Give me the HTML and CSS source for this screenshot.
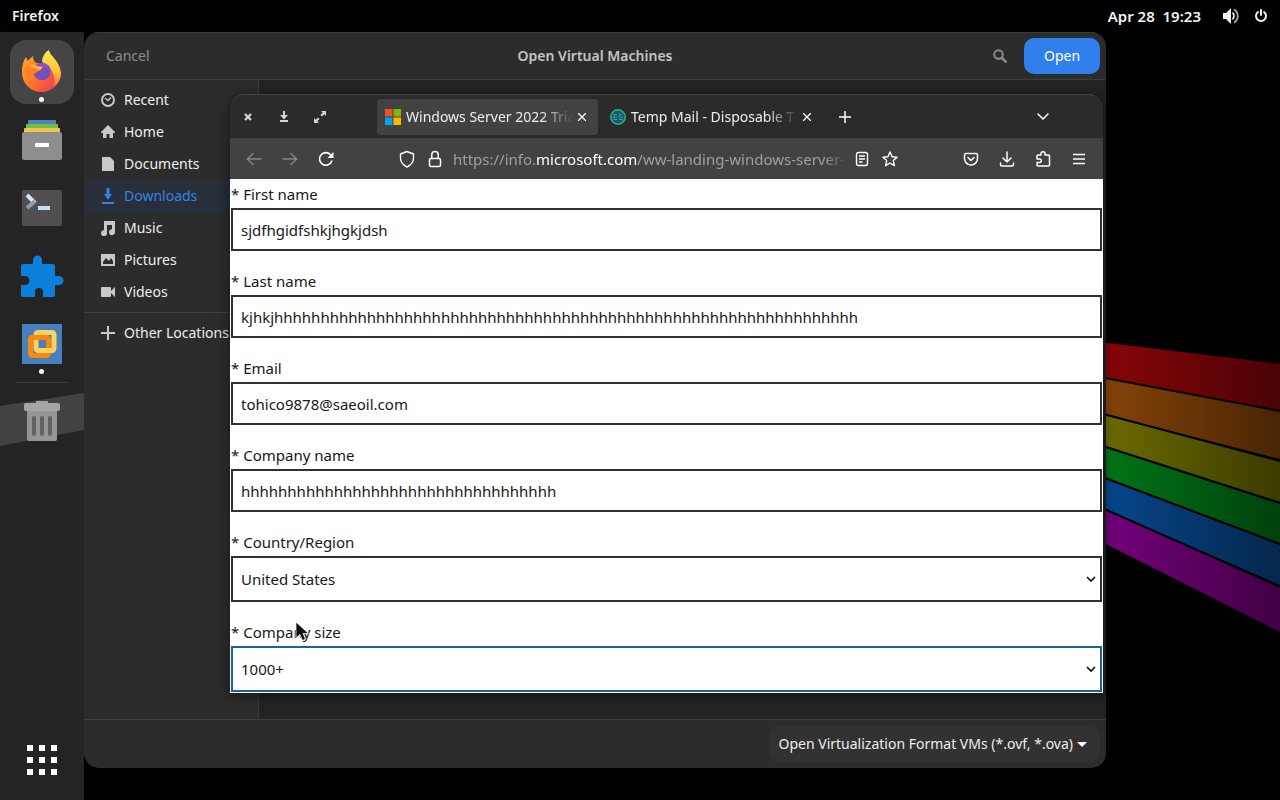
FILE: index.html
```html
<!DOCTYPE html>
<html lang="en">
<head>
    <meta charset="UTF-8">
    <meta name="viewport" content="width=device-width, initial-scale=1.0">
    <title>Desktop</title>
    <link rel="stylesheet" href="styles.css">
</head>
<body>

    <svg class="wallpaper" viewBox="0 0 1280 800" preserveAspectRatio="none" aria-hidden="true">
        <defs>
            <linearGradient id="shade" x1="1106" x2="1280" y1="0" y2="0" gradientUnits="userSpaceOnUse">
                <stop offset="0" stop-color="#000" stop-opacity="0"/>
                <stop offset="1" stop-color="#000" stop-opacity="0.45"/>
            </linearGradient>
        </defs>
        <rect width="1280" height="800" fill="#000"/>
        <path fill="#870508" d="M1100 342l180 22v46l-180-33z"/>
        <path fill="#844308" d="M1100 377l180 34v48l-180-46z"/>
        <path fill="#6b6b00" d="M1100 414l180 47v41l-180-57z"/>
        <path fill="#007517" d="M1100 446l180 58v39l-180-67z"/>
        <path fill="#07468b" d="M1100 477l180 68v40l-180-78z"/>
        <path fill="#74007b" d="M1100 508l180 79v45l-180-91z"/>
        <path fill="none" stroke="#050505" stroke-width="2" d="M1100 377l180 34M1100 413l180 48M1100 445l180 58M1100 476l180 68M1100 507l180 80"/>
        <path fill="url(#shade)" d="M1100 330h180v310h-180z"/>
    </svg>

    <header class="topbar">
        <span class="app-name">Firefox</span>
        <span class="clock">Apr 28&nbsp; 19:23</span>
        <span class="status">
            <svg width="16" height="16" viewBox="0 0 16 16"><path fill="#f2f2f2" d="M0 5h3l5-5v16l-5-5H0z"/><path fill="none" stroke="#f2f2f2" stroke-width="1.7" d="M9.5 4.7a4.5 4.5 0 0 1 0 6.6"/><path fill="none" stroke="#b0b0b0" stroke-width="1.7" d="M11 1.5a7.5 7.5 0 0 1 0 13"/></svg>
            <svg width="14" height="14" viewBox="0 0 14 14" fill="none" stroke="#f2f2f2" stroke-width="2" stroke-linecap="round"><path d="M4 3a5 5 0 1 0 6 0M7 1v5"/></svg>
        </span>
    </header>

    <div class="desktop">
        <nav class="dock" aria-label="Dock">
            <svg class="dock-band" viewBox="0 0 84 54" preserveAspectRatio="none" aria-hidden="true"><path fill="#434343" d="M0 13L84 0v37L0 53z"/></svg>

            <button class="dock-item active" aria-label="Firefox">
                <svg width="42" height="44" viewBox="0 0 42 44">
                    <defs>
                        <linearGradient id="fox" x1="4" y1="14" x2="36" y2="38" gradientUnits="userSpaceOnUse">
                            <stop offset="0" stop-color="#ff9a2b"/>
                            <stop offset="0.5" stop-color="#ff6d2a"/>
                            <stop offset="1" stop-color="#e93a5c"/>
                        </linearGradient>
                        <linearGradient id="flame" x1="28" y1="2" x2="36" y2="36" gradientUnits="userSpaceOnUse">
                            <stop offset="0" stop-color="#ffe352"/>
                            <stop offset="0.6" stop-color="#ffc23a"/>
                            <stop offset="1" stop-color="#ff7139"/>
                        </linearGradient>
                    </defs>
                    <path fill="url(#fox)" d="M1 22c0-6 1-11 4-15l2 4c1-2 3-3 5-5 0 3 1 5 3 7h12l13 9c0 12-9 20-19.500 20S1 34 1 22z"/>
                    <path fill="url(#flame)" d="M21 10c1-4 3-8 7-10 1 5 5 7 8 12 7 11 4 20-4 25 3-7 1-14-3-19-3-3-8-4-8-8z"/>
                    <circle cx="21" cy="21.500" r="8.800" fill="#7350b4"/>
                    <path fill="#8c50d0" d="M15 15c5-4 13-2 14 5-4-3-8-4-14-5z"/>
                    <path fill="#ff8126" d="M3 18c3-5 9-5 13-2l5 2c-1 2-3 3-5 4-3 1-4 4-3 7-5-1-9-6-10-11z"/>
                    <path fill="#ffb03f" d="M7 15c4-1 7 0 9 1l6 1-3 3c-4-1-8-2-12-5z"/>
                </svg>
                <i class="dot"></i>
            </button>

            <button class="dock-item" aria-label="Files">
                <svg width="40" height="40" viewBox="0 0 40 40"><rect x="6" width="28" height="8" rx="1" fill="#4b85bd"/><rect x="4" y="4" width="32" height="8" rx="1" fill="#76bd46"/><rect x="2" y="8" width="36" height="8" rx="1" fill="#f1c552"/><rect y="12" width="40" height="28" rx="2" fill="#8e8e8e"/><rect x="13" y="23" width="14" height="4" rx="1" fill="#fff"/></svg>
            </button>

            <button class="dock-item" aria-label="Terminal">
                <svg width="40" height="36" viewBox="0 0 40 36"><rect width="40" height="36" rx="2" fill="#505050"/><path fill="none" stroke="#d4e6f7" stroke-width="4" d="M5 5l8 8"/><path fill="none" stroke="#9b9b9b" stroke-width="4" d="M13 11l-8 7"/><path fill="#c5e0f7" d="M16 16h12v4H16z"/></svg>
            </button>

            <button class="dock-item" aria-label="Extensions">
                <svg width="44" height="44" viewBox="0 0 44 44"><path fill="#0b80da" d="M3 10h10V6a4.500 4.500 0 0 1 9 0v4h11a2 2 0 0 1 2 2v10h4a4 4 0 0 1 0 9h-4v10a2 2 0 0 1-2 2H23v-5a4 4 0 0 0-8 0v5H3a2 2 0 0 1-2-2V31h4a4 4 0 0 0 0-9H1V12a2 2 0 0 1 2-2z"/></svg>
            </button>

            <button class="dock-item" aria-label="VMware">
                <svg width="40" height="40" viewBox="0 0 40 40"><rect width="40" height="40" fill="#4680bf"/><rect x="8.500" y="13.500" width="18" height="18" rx="2" fill="none" stroke="#f7890f" stroke-width="5"/><rect x="14" y="8.500" width="18" height="18" rx="2" fill="none" stroke="#fdd05f" stroke-width="5"/><path fill="none" stroke="#f7890f" stroke-width="5" d="M8.500 24v-8.500q0-2 2-2H17"/></svg>
                <i class="dot"></i>
            </button>

            <hr class="dock-line">

            <button class="dock-item" aria-label="Trash">
                <svg width="36" height="40" viewBox="0 0 36 40"><path fill="#a2a2a2" d="M12 0h12v3H12z"/><rect y="2" width="36" height="8" rx="2" fill="#a5a5a5"/><path fill="#959595" d="M3 10h30v28q0 2-2 2H5q-2 0-2-2z"/><path stroke="#626262" stroke-width="4" stroke-linecap="round" d="M10 17v16M18 17v16M26 17v16"/></svg>
            </button>

            <button class="dock-item apps" aria-label="Show applications">
                <svg width="30" height="30" viewBox="0 0 30 30" fill="#fff"><path d="M0 0h6v6H0zM12 0h6v6h-6zM24 0h6v6h-6zM0 12h6v6H0zM12 12h6v6h-6zM24 12h6v6h-6zM0 24h6v6H0zM12 24h6v6h-6zM24 24h6v6h-6z"/></svg>
            </button>
        </nav>

        <main class="stage">
            <section class="dialog">
                <header class="dialog-header">
                    <button class="cancel">Cancel</button>
                    <h1>Open Virtual Machines</h1>
                    <div class="dialog-actions">
                        <button class="search" aria-label="Search">
                            <svg width="14" height="14" viewBox="0 0 14 14" fill="none" stroke="#8c8c8c" stroke-width="2"><circle cx="5.5" cy="5.5" r="4.3"/><path stroke-width="2.5" d="M8.5 8.5l5 5"/></svg>
                        </button>
                        <button class="open">Open</button>
                    </div>
                </header>
                <div class="dialog-body">
                    <nav class="places" aria-label="Places">
                        <a href="#"><svg width="16" height="16" viewBox="0 0 16 16" fill="none" stroke="#c8c8c8" stroke-width="2"><circle cx="8" cy="8" r="6"/><path stroke-width="1.5" d="M5 6l3 2.5L11 5.500"/></svg>Recent</a>
                        <a href="#"><svg width="16" height="16" viewBox="0 0 16 16" fill="#c8c8c8"><path d="M8 1l7 7v1h-2v5H9.500V10h-3v4H3V9H1V8z"/></svg>Home</a>
                        <a href="#"><svg width="16" height="16" viewBox="0 0 16 16" fill="#c8c8c8"><path d="M2 1h8l4 4v10H2z"/></svg>Documents</a>
                        <a href="#" class="current"><svg width="16" height="16" viewBox="0 0 16 16" fill="#3584e4"><path d="M6.500 0h3v6H12l-4 6-4-6h2.500zM2 14h12v2H2z"/></svg>Downloads</a>
                        <a href="#"><svg width="16" height="16" viewBox="0 0 16 16" fill="#c8c8c8"><path d="M4 1h11v11a3 3 0 1 1-3-2.800V5H7v8a3 3 0 1 1-3-2.800z"/></svg>Music</a>
                        <a href="#"><svg width="16" height="16" viewBox="0 0 16 16" fill="#c8c8c8"><path fill-rule="evenodd" d="M1 2h14v12H1zM3 12h10V9l-2-3-2 3-3-3-3 4z"/></svg>Pictures</a>
                        <a href="#"><svg width="16" height="16" viewBox="0 0 16 16" fill="#c8c8c8"><path d="M2 3h8q1 0 1 1v3l4-4v10l-4-4v3q0 1-1 1H2q-1 0-1-1V4q0-1 1-1z"/></svg>Videos</a>
                        <hr>
                        <a href="#"><svg width="16" height="16" viewBox="0 0 16 16" fill="#c8c8c8"><path d="M7 1h2v6h6v2H9v6H7V9H1V7h6z"/></svg>Other Locations</a>
                    </nav>
                    <div class="files"></div>
                </div>
                <footer class="dialog-footer">
                    <button class="filter">Open Virtualization Format VMs (*.ovf, *.ova)
                        <svg width="10" height="5" viewBox="0 0 10 5"><path fill="#fff" d="M0 0h10L5 5z"/></svg>
                    </button>
                </footer>
            </section>

            <section class="browser">
                <div class="tabbar">
                    <button class="tool" aria-label="Close"><svg width="8" height="8" viewBox="0 0 8 8"><path stroke="#d5d5d5" stroke-width="2.300" d="M1 1l6 6M7 1L1 7"/></svg></button>
                    <button class="tool" aria-label="Minimize"><svg width="10" height="12" viewBox="0 0 10 12" fill="#d5d5d5"><path d="M4 0h2v4h3L5 8.500 1 4h3zM1 9h8v2H1z"/></svg></button>
                    <button class="tool" aria-label="Maximize"><svg width="12" height="12" viewBox="0 0 12 12" fill="#d5d5d5"><path d="M7 0h5v5l-1.700-1.700L8 5.600 6.400 4l2.300-2.300zM0 7l1.700 1.700L4 6.400 5.600 8l-2.300 2.300L5 12H0z"/></svg></button>
                    <div class="tab selected">
                        <svg width="16" height="16" viewBox="0 0 16 16"><path fill="#f25022" d="M0 0h7.500v7.500H0z"/><path fill="#7fba00" d="M8.500 0H16v7.500H8.500z"/><path fill="#00a4ef" d="M0 8.500h7.500V16H0z"/><path fill="#ffb900" d="M8.500 8.500H16V16H8.500z"/></svg>
                        <span class="tab-title">Windows Server 2022 Tria</span>
                        <button aria-label="Close tab"><svg width="8" height="8" viewBox="0 0 8 8"><path stroke="#fff" stroke-width="1.300" d="M0 0l8 8M8 0L0 8"/></svg></button>
                    </div>
                    <div class="tab">
                        <svg width="16" height="16" viewBox="0 0 16 16" fill="none"><circle cx="8" cy="8" r="7.200" fill="#175b63" stroke="#25b592" stroke-width="1.500"/><path stroke="#35a0a0" d="M4 5.500h3M4 8h3M4 10.500h3M4 5.500v5M12 5.500H9.500V8H12v2.500H9"/></svg>
                        <span class="tab-title">Temp Mail - Disposable T</span>
                        <button aria-label="Close tab"><svg width="8" height="8" viewBox="0 0 8 8"><path stroke="#fff" stroke-width="1.300" d="M0 0l8 8M8 0L0 8"/></svg></button>
                    </div>
                    <button class="tool new-tab" aria-label="New tab"><svg width="12" height="12" viewBox="0 0 12 12"><path stroke="#fff" stroke-width="1.500" d="M6 0v12M0 6h12"/></svg></button>
                    <button class="tool list-tabs" aria-label="List all tabs"><svg width="12" height="8" viewBox="0 0 12 8"><path fill="none" stroke="#fff" stroke-width="1.500" stroke-linecap="round" d="M1 1l5 5 5-5"/></svg></button>
                </div>

                <div class="toolbar">
                    <button class="tool" aria-label="Back"><svg width="16" height="16" viewBox="0 0 16 16" fill="none" stroke="#858585" stroke-width="1.400" stroke-linecap="round" stroke-linejoin="round"><path d="M15 8H1M7 2.500L1.200 8 7 13.500"/></svg></button>
                    <button class="tool" aria-label="Forward"><svg width="16" height="16" viewBox="0 0 16 16" fill="none" stroke="#858585" stroke-width="1.400" stroke-linecap="round" stroke-linejoin="round"><path d="M1 8h14M9 2.500L14.800 8 9 13.500"/></svg></button>
                    <button class="tool" aria-label="Reload"><svg width="16" height="16" viewBox="0 0 16 16" fill="none" stroke="#fff" stroke-width="1.600" stroke-linecap="round"><path d="M13.800 10A6.300 6.300 0 1 1 12.500 3.700L14 5.200"/><path fill="#fff" stroke="none" d="M15.500 1v6h-6z"/></svg></button>
                    <div class="address">
                        <svg width="16" height="18" viewBox="0 0 16 18" fill="none" stroke="#fff" stroke-width="1.400" stroke-linejoin="round"><path d="M8 1.500L14.500 4v4c0 4-2.500 7-6.500 9-4-2-6.500-5-6.500-9V4z"/></svg>
                        <svg width="16" height="18" viewBox="0 0 16 18" fill="none" stroke="#fff" stroke-width="1.500"><rect x="2.500" y="8.500" width="11" height="8" rx="1.500"/><path d="M4.800 8.500V4.800a3.200 3.200 0 0 1 6.400 0v3.700"/></svg>
                        <span class="url">https://info.<b>microsoft.com</b>/ww-landing-windows-server-</span>
                        <svg width="16" height="16" viewBox="0 0 16 16" fill="none" stroke="#fff" stroke-width="1.400"><rect x="2.500" y="1.500" width="11" height="13" rx="2"/><path d="M5 5h6M5 8h6M5 11h3.500"/></svg>
                        <svg width="16" height="16" viewBox="0 0 16 16" fill="none" stroke="#fff" stroke-width="1.400" stroke-linejoin="round"><path d="M8 1l2.100 4.700 5 .5-3.800 3.400 1.100 5L8 12l-4.400 2.600 1.100-5L.9 6.200l5-.5z"/></svg>
                    </div>
                    <button class="tool" aria-label="Save to Pocket"><svg width="16" height="16" viewBox="0 0 16 16" fill="none" stroke="#fff" stroke-width="1.500" stroke-linecap="round" stroke-linejoin="round"><path d="M3 2.500h10a1.500 1.500 0 0 1 1.500 1.500v3.500a6.500 6.500 0 0 1-13 0V4A1.500 1.500 0 0 1 3 2.500zM5 6.500l3 3 3-3"/></svg></button>
                    <button class="tool" aria-label="Downloads"><svg width="16" height="16" viewBox="0 0 16 16" fill="none" stroke="#fff" stroke-width="1.500" stroke-linecap="round" stroke-linejoin="round"><path d="M8 1v9.500M4 7l4 4 4-4M1.500 12v1.500a1.500 1.500 0 0 0 1.500 1.500h10a1.500 1.500 0 0 0 1.500-1.500V12"/></svg></button>
                    <button class="tool" aria-label="Extensions"><svg width="16" height="16" viewBox="0 0 16 16" fill="none" stroke="#fff" stroke-width="1.500" stroke-linejoin="round"><path d="M6 4V2.800a2 2 0 0 1 4 0V4h3.500q1 0 1 1v9q0 1-1 1H3q-1 0-1-1v-2.500h2.500a1.700 1.700 0 0 0 0-3.500H2V5q0-1 1-1z"/></svg></button>
                    <button class="tool" aria-label="Menu"><svg width="12" height="12" viewBox="0 0 12 12"><path stroke="#fff" stroke-width="1.400" d="M0 1.500h12M0 6h12M0 10.500h12"/></svg></button>
                </div>

                <form class="page">
                    <div class="field">
                        <label for="first">* First name</label>
                        <input id="first" type="text" value="sjdfhgidfshkjhgkjdsh">
                    </div>
                    <div class="field">
                        <label for="last">* Last name</label>
                        <input id="last" type="text" value="kjhkjhhhhhhhhhhhhhhhhhhhhhhhhhhhhhhhhhhhhhhhhhhhhhhhhhhhhhhhhhhhhhhh">
                    </div>
                    <div class="field">
                        <label for="email">* Email</label>
                        <input id="email" type="email" value="tohico9878@saeoil.com">
                    </div>
                    <div class="field">
                        <label for="company">* Company name</label>
                        <input id="company" type="text" value="hhhhhhhhhhhhhhhhhhhhhhhhhhhhhhhhhh">
                    </div>
                    <div class="field">
                        <label for="country">* Country/Region</label>
                        <div class="select">
                            <select id="country"><option>United States</option></select>
                            <svg width="10" height="6" viewBox="0 0 10 6"><path fill="none" stroke="#111" stroke-width="1.700" d="M1 1l4 4 4-4"/></svg>
                        </div>
                    </div>
                    <div class="field">
                        <label for="size">* Company size</label>
                        <div class="select focused">
                            <select id="size"><option>1000+</option></select>
                            <svg width="10" height="6" viewBox="0 0 10 6"><path fill="none" stroke="#111" stroke-width="1.700" d="M1 1l4 4 4-4"/></svg>
                        </div>
                    </div>
                </form>
            </section>
        </main>
    </div>

    <svg class="cursor" width="16" height="22" viewBox="0 0 16 22" aria-hidden="true"><path fill="#111" stroke="#fff" stroke-width="0.700" d="M1 1v16l4-3.500 2.500 6 3-1.200L8 12.500h5.500z"/></svg>

</body>
</html>
```
FILE: styles.css
```css
* {
    box-sizing: border-box;
}

body {
    margin: 0;
    height: 100vh;
    display: flex;
    flex-direction: column;
    overflow: hidden;
    background: #000;
    color: #eee;
    font-family: "Noto Sans", "Open Sans", sans-serif;
    font-size: 14px;
    line-height: 20px;
}

button {
    border: none;
    background: none;
    padding: 0;
    color: inherit;
    font: inherit;
}

svg {
    display: block;
    flex-shrink: 0;
}

.wallpaper {
    position: absolute;
    inset: 0;
    width: 100%;
    height: 100%;
    z-index: -1;
}

/* top bar */
.topbar {
    display: flex;
    align-items: center;
    height: 32px;
    flex-shrink: 0;
    padding: 0 12px;
    background: #000;
    color: #f2f2f2;
    font-weight: 600;
}

.clock {
    margin-left: auto;
    font-size: 15px;
}

.status {
    display: flex;
    align-items: center;
    gap: 15px;
    margin-left: 22px;
}

.desktop {
    display: flex;
    flex: 1;
    min-height: 0;
}

/* dock */
.dock {
    position: relative;
    width: 84px;
    flex-shrink: 0;
    display: flex;
    flex-direction: column;
    align-items: center;
    gap: 4px;
    padding: 8px 0;
    background: #242424;
}

.dock-band {
    position: absolute;
    left: 0;
    top: 361px;
    width: 100%;
    height: 54px;
}

.dock-item {
    position: relative;
    display: flex;
    align-items: center;
    justify-content: center;
    width: 64px;
    height: 64px;
    border-radius: 16px;
}

.dock-item.active {
    background: #454545;
}

.dot {
    position: absolute;
    bottom: 2px;
    left: 50%;
    width: 5px;
    height: 5px;
    margin-left: -3px;
    border-radius: 50%;
    background: #fff;
}

.dock-line {
    width: 52px;
    margin: 2px 0;
    border: none;
    border-top: 1px solid #3c3c3c;
}

.apps {
    margin-top: auto;
}

.stage {
    position: relative;
    flex: 1;
}

/* file dialog */
.dialog {
    position: absolute;
    inset: 0 174px 32px 0;
    display: flex;
    flex-direction: column;
    overflow: hidden;
    border-radius: 15px;
    background: #2c2c2c;
}

.dialog-header {
    display: grid;
    grid-template-columns: 1fr auto 1fr;
    align-items: center;
    height: 48px;
    padding: 0 6px 0 22px;
    border-top: 1px solid #3a3a3a;
    border-bottom: 1px solid #3d3d3d;
}

.dialog-header h1 {
    margin: 0 16px 0 0;
    color: #c5c5c5;
    font-size: 14px;
    font-weight: 600;
}

.cancel {
    justify-self: start;
    color: #8c8c8c;
}

.dialog-actions {
    display: flex;
    align-items: center;
    justify-content: flex-end;
    gap: 17px;
}

.open {
    width: 76px;
    height: 36px;
    border-radius: 10px;
    background: #2f80ec;
    color: #fff;
}

.dialog-body {
    display: flex;
    flex: 1;
}

.places {
    width: 175px;
    flex-shrink: 0;
    padding-top: 4px;
    border-right: 1px solid #3d3d3d;
    white-space: nowrap;
}

.places a {
    display: flex;
    align-items: center;
    gap: 8px;
    height: 32px;
    padding-left: 16px;
    color: #eee;
    text-decoration: none;
}

.places .current {
    background: #282f3b;
    color: #3584e4;
}

.places hr {
    margin: 4px 0;
    border: none;
    border-top: 1px solid #404040;
}

.files {
    flex: 1;
    background: #242323;
}

.dialog-footer {
    display: flex;
    align-items: center;
    justify-content: flex-end;
    height: 49px;
    padding-right: 6px;
    border-top: 1px solid #404040;
}

.filter {
    display: flex;
    align-items: center;
    gap: 4px;
    height: 36px;
    padding: 0 13px 0 10px;
    border-radius: 10px;
    background: #323232;
}

/* browser window */
.browser {
    position: absolute;
    inset: 62px 177px auto 146px;
    overflow: hidden;
    border-top: 1px solid #434343;
    border-radius: 15px 15px 0 0;
    background: #2b2b2b;
    box-shadow: 0 3px 14px rgba(0, 0, 0, 0.5);
}

.tabbar {
    display: flex;
    align-items: center;
    height: 43px;
    padding: 0 42px 0 0;
}

.tool {
    display: flex;
    align-items: center;
    justify-content: center;
    width: 36px;
    height: 36px;
    flex-shrink: 0;
}

.tab {
    display: flex;
    align-items: center;
    width: 221px;
    height: 36px;
    gap: 5px;
    padding: 0 12px 0 8px;
    margin-right: 4px;
    border-radius: 4px;
}

.tab.selected {
    margin-left: 39px;
    background: #424242;
}

.tab-title {
    flex: 1;
    overflow: hidden;
    white-space: nowrap;
    mask-image: linear-gradient(to left, transparent, #000 32px);
}

.list-tabs {
    margin-left: auto;
}

.toolbar {
    display: flex;
    align-items: center;
    height: 41px;
    padding: 0 6px;
    background: #424242;
}

.address {
    display: flex;
    align-items: center;
    flex: 1;
    gap: 12px;
    min-width: 0;
    margin: 0 55px;
}

.url {
    flex: 1;
    overflow: hidden;
    margin: 0 -6px 0 -2px;
    white-space: nowrap;
    color: #a0a0a0;
    font-size: 15px;
    mask-image: linear-gradient(to left, transparent, #000 24px);
}

.url b {
    color: #fff;
    font-weight: 400;
}

/* form */
.page {
    display: flex;
    flex-direction: column;
    gap: 16px;
    padding: 1px;
    background: #fff;
    color: #171717;
    font-size: 15px;
}

.field label {
    display: block;
    height: 28px;
    padding-top: 4px;
}

.field input,
.field select {
    display: block;
    width: 100%;
    height: 43px;
    padding: 0 8px;
    border: 2px solid #323130;
    border-radius: 0;
    outline: none;
    background: #fff;
    color: #171717;
    font: inherit;
    appearance: none;
}

.field select {
    height: 46px;
}

.select {
    position: relative;
}

.select svg {
    position: absolute;
    right: 6px;
    top: 20px;
    pointer-events: none;
}

.select.focused select {
    border-color: #19649c;
}

.cursor {
    position: absolute;
    left: 295px;
    top: 621px;
}
```
